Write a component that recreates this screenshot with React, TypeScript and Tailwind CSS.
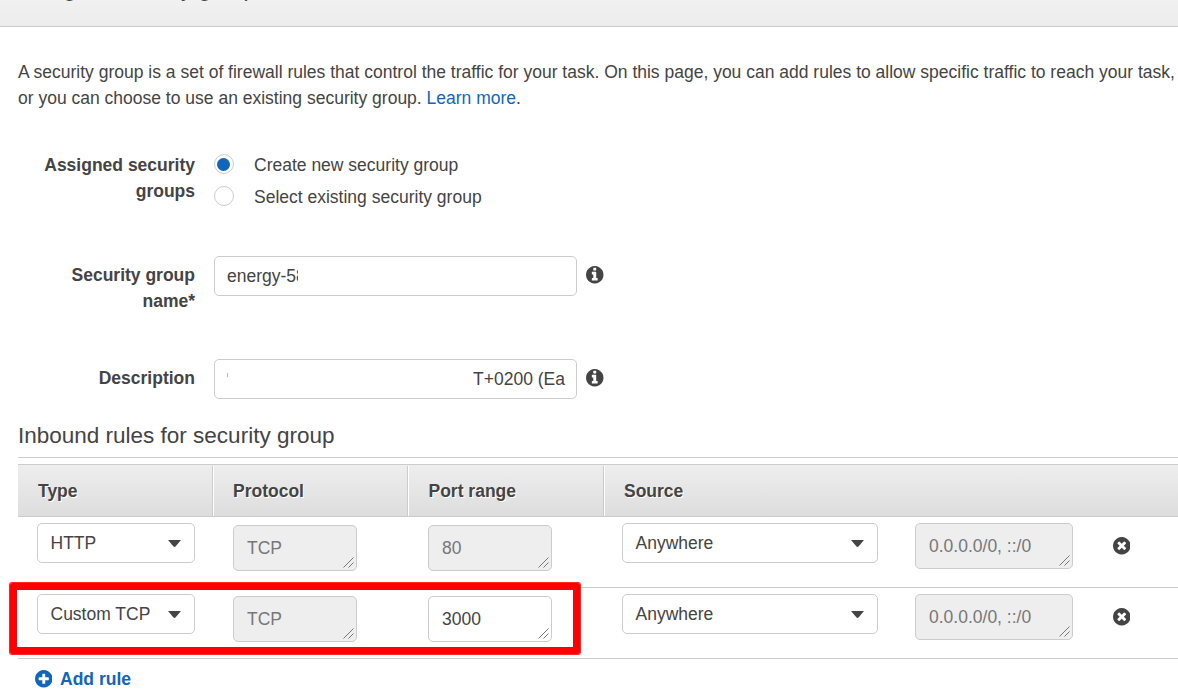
import React from "react";

const DISC =
  "q0 209-103 385.5t-279.5 279.5-385.5 103-385.5-103-279.5-279.5-103-385.5 103-385.5 279.5-279.5 385.5-103 385.5 103 279.5 279.5 103 385.5z";

const ICONS = {
  info:
    "M1152 1376v-160q0-14-9-23t-23-9h-96v-512q0-14-9-23t-23-9h-320q-14 0-23 9t-9 23v160q0 14 9 23t23 9h96v320h-96q-14 0-23 9t-9 23v160q0 14 9 23t23 9h448q14 0 23-9t9-23zm-128-896v-160q0-14-9-23t-23-9h-192q-14 0-23 9t-9 23v160q0 14 9 23t23 9h192q14 0 23-9t9-23zm640 416" +
    DISC,
  remove:
    "M1277 1122q0-26-19-45l-181-181 181-181q19-19 19-45 0-27-19-46l-90-90q-19-19-46-19-26 0-45 19l-181 181-181-181q-19-19-45-19-27 0-46 19l-90 90q-19 19-19 46 0 26 19 45l181 181-181 181q-19 19-19 45 0 27 19 46l90 90q19 19 46 19 26 0 45-19l181-181 181 181q19 19 45 19 27 0 46-19l90-90q19-19 19-46zm387-226" +
    DISC,
  add:
    "M1344 960v-128q0-26-19-45t-45-19h-256v-256q0-26-19-45t-45-19h-128q-26 0-45 19t-19 45v256h-256q-26 0-45 19t-19 45v128q0 26 19 45t45 19h256v256q0 26 19 45t45 19h128q26 0 45-19t19-45v-256h256q26 0 45-19t19-45zm320-64" +
    DISC,
};

function Icon({ name, className = "" }: { name: keyof typeof ICONS; className?: string }) {
  return (
    <svg viewBox="128 128 1536 1536" fill="currentColor" className={`size-[17.5px] shrink-0 ${className}`}>
      <path d={ICONS[name]} />
    </svg>
  );
}

function Radio({ label, checked }: { label: string; checked?: boolean }) {
  return (
    <label className="flex h-8 items-center">
      <span className="flex size-5 items-center rounded-full border border-[#ccc] bg-white pl-[2px]">
        {checked && <span className="size-[13px] rounded-full bg-[#1166bb]" />}
      </span>
      <span className="ml-5 pt-[2px]">{label}</span>
    </label>
  );
}

function Label({ children }: { children: React.ReactNode }) {
  return <div className="w-[195px] shrink-0 pl-8 text-right font-bold">{children}</div>;
}

function Select({ value, className }: { value: string; className: string }) {
  return (
    <div
      className={`flex h-10 items-center justify-between rounded-[5px] border border-[#ccc] bg-white pr-[13px] pl-[12.5px] ${className}`}
    >
      <span>{value}</span>
      <svg viewBox="0 0 13 7" className="h-[7px] w-[13px]" fill="#444">
        <path d="M0 0H13L7.5 6.5Q6.5 7.3 5.5 6.5Z" />
      </svg>
    </div>
  );
}

function Area({ value, editable, className }: { value: string; editable?: boolean; className: string }) {
  return (
    <div
      className={`relative flex h-[46px] items-center rounded-[5px] border border-[#ccc] pl-[13px] ${
        editable ? "bg-white" : "bg-[#eee] text-[#777]"
      } ${className}`}
    >
      {value}
      <svg viewBox="0 0 11 11" className="absolute right-[2px] bottom-[2px] size-[11px]" stroke="#777" fill="none">
        <path d="M0.5 10.5L10.5 0.5M5.5 10.5L10.5 5.5" />
      </svg>
    </div>
  );
}

const COLUMNS = "grid grid-cols-[195px_195px_196px_574px]";

function Rule({ type, port, editable }: { type: string; port: string; editable?: boolean }) {
  return (
    <div className={`${COLUMNS} h-[71px] border-b border-[#ccc] pt-[6px]`}>
      <div className="pl-[19px]">
        <Select value={type} className="w-[158px]" />
      </div>
      <div className="pt-[2px] pl-5">
        <Area value="TCP" className="w-[124px]" />
      </div>
      <div className="pt-[2px] pl-5">
        <Area value={port} editable={editable} className="w-[124px]" />
      </div>
      <div className="flex items-start pl-[18px]">
        <Select value="Anywhere" className="w-[256px]" />
        <Area value="0.0.0.0/0, ::/0" className="ml-[37px] w-[158px]" />
        <Icon name="remove" className="mt-[14px] ml-[39.5px]" />
      </div>
    </div>
  );
}

export default function App() {
  return (
    <div className="relative h-[700px] w-[1178px] overflow-hidden bg-white font-['Liberation_Sans',Arial,sans-serif] text-[17.5px] leading-[26px] text-[#444]">
      <header className="flex h-[27px] items-end overflow-hidden border-b border-[#ccc] bg-linear-to-b from-[#f1f1f1] to-[#ececec] pb-6 pl-[11px]">
        <h1 className="text-[22.5px] leading-[26px]">Configure security groups</h1>
      </header>

      <p className="mt-8 pl-[18px] whitespace-nowrap">
        A security group is a set of firewall rules that control the traffic for your task. On this page, you can add
        rules to allow specific traffic to reach your task,
        <br />
        or you can choose to use an existing security group. <a className="text-[#1166bb]">Learn more</a>.
      </p>

      <div className="mt-[41px] flex h-[104px]">
        <Label>Assigned security groups</Label>
        <div className="-mt-1 ml-[19px]">
          <Radio label="Create new security group" checked />
          <Radio label="Select existing security group" />
        </div>
      </div>

      <div className="flex h-[103px] items-start">
        <div className="pt-[6px]">
          <Label>Security group name*</Label>
        </div>
        <div className="ml-[19px] flex h-10 w-[363px] items-center rounded-[5px] border border-[#ccc] pl-3">
          <span className="w-[71px] overflow-hidden whitespace-nowrap">energy-58</span>
        </div>
        <Icon name="info" className="mt-[10px] ml-[9px]" />
      </div>

      <div className="flex h-[62px] items-start">
        <div className="pt-[6px]">
          <Label>Description</Label>
        </div>
        <div className="ml-[19px] flex h-10 w-[363px] items-center justify-between rounded-[5px] border border-[#ccc] pr-[11px] pl-3">
          <span className="mb-2 h-1 w-px bg-[#bbb]" />
          <span>T+0200 (Ea</span>
        </div>
        <Icon name="info" className="mt-[10px] ml-[9px]" />
      </div>

      <section className="ml-[18px] w-[1160px]">
        <h2 className="h-[37px] border-b border-[#ccc] text-[22.5px] leading-[30px]">Inbound rules for security group</h2>
        <div
          className={`${COLUMNS} mt-[6px] h-[53px] border-y border-[#ccc] bg-linear-to-b from-[#eee] to-[#ddd] pt-px leading-[50px] font-bold [text-shadow:1px_1px_0_#fff]`}
        >
          <div className="border-r border-[#ccc] pl-5">Type</div>
          <div className="border-r border-l border-r-[#ccc] border-l-white pl-[19px]">Protocol</div>
          <div className="border-r border-l border-r-[#ccc] border-l-white pl-[19.5px]">Port range</div>
          <div className="border-l border-white pl-[19px]">Source</div>
        </div>
        <Rule type="HTTP" port="80" />
        <Rule type="Custom TCP" port="3000" editable />
        <a className="mt-[7px] flex items-center pl-[16.5px] font-bold text-[#1166bb]">
          <Icon name="add" />
          <span className="ml-2">Add rule</span>
        </a>
      </section>

      <div className="absolute top-[583px] left-[10px] h-[71px] w-[570px] rounded-[2px] border-[7px] border-[#f00] shadow-[0_0_0_1px_rgba(255,0,0,0.85)]" />
    </div>
  );
}
